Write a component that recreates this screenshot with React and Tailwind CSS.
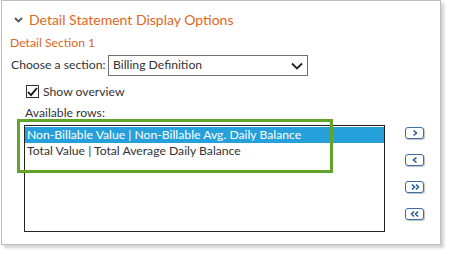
import React, { useState } from "react";

const ROWS = [
  "Non-Billable Value | Non-Billable Avg. Daily Balance",
  "Total Value | Total Average Daily Balance",
];

const MoveButton = ({ children }) => (
  <button className="w-[19px] h-[12px] flex items-center justify-center rounded-[3px] border border-[#3a6ea5] bg-white shadow-[1px_1px_1px_rgba(0,0,0,0.25)] text-[#2b5c93]">
    {children}
  </button>
);

const Chev = ({ d }) => (
  <svg width="12" height="8" viewBox="0 0 12 8" fill="none" stroke="currentColor" strokeWidth="1.6">
    <path d={d} />
  </svg>
);

const App = () => {
  const [selected, setSelected] = useState(0);
  const [overview, setOverview] = useState(true);

  return (
    <div className="w-[450px] h-[254px] bg-white font-['Lato',sans-serif] text-[#333] whitespace-nowrap">
      <div className="w-[440px] h-[245px] ml-px border border-[#bdbdbd] bg-white shadow-[3px_3px_3px_rgba(0,0,0,0.18)] relative">
        <div className="flex items-center gap-[6px] pl-[12px] pt-[9px] h-[29px] text-[#e0661c]">
          <svg width="9" height="6" viewBox="0 0 9 6" fill="none" stroke="#555" strokeWidth="1.8">
            <path d="M1 1l3.5 3.5L8 1" />
          </svg>
          <span className="text-[14px] leading-[20px]">Detail Statement Display Options</span>
        </div>

        <div className="pl-[8px] pt-[5px] h-[25px] text-[12.2px] leading-[16px] text-[#e0661c]">Detail Section 1</div>

        <div className="flex items-center pl-[9px] h-[21px] text-[12.2px]">
          <span className="w-[97px]">Choose a section:</span>
          <div className="w-[200px] h-[21px] border border-[#707070] flex items-center justify-between pl-[4px] pr-[4px]">
            <span>Billing Definition</span>
            <svg width="12" height="8" viewBox="0 0 12 8" fill="none" stroke="#222" strokeWidth="1.8">
              <path d="M1 1.5l5 5 5-5" />
            </svg>
          </div>
        </div>

        <label className="flex items-center gap-[4px] pl-[24px] pt-[7px] h-[24px] text-[12.2px] leading-[16px]">
          <span
            onClick={() => setOverview(!overview)}
            className="w-[13px] h-[13px] border border-[#333] flex items-center justify-center bg-white"
          >
            {overview && (
              <svg width="11" height="10" viewBox="0 0 11 10" fill="none" stroke="#111" strokeWidth="1.8">
                <path d="M1 5l3 3.2L10 1" />
              </svg>
            )}
          </span>
          Show overview
        </label>

        <div className="pl-[23px] pt-[5px] h-[23px] text-[12.2px] leading-[16px]">Available rows:</div>

        <div className="flex pl-[22px] pt-[2px]">
          <div className="w-[361px] h-[107px] border border-[#222] text-[12.2px] leading-[16px] pt-px">
            {ROWS.map((r, i) => (
              <div
                key={r}
                onClick={() => setSelected(i)}
                className={i === selected ? "bg-[#26a0da] text-white pl-[2px]" : "pl-[2px]"}
              >
                {r}
              </div>
            ))}
          </div>
          <div className="flex flex-col gap-[15px] pl-[20px] pt-[2px]">
            <MoveButton><Chev d="M4.5 1.5l3 2.5-3 2.5" /></MoveButton>
            <MoveButton><Chev d="M7.5 1.5l-3 2.5 3 2.5" /></MoveButton>
            <MoveButton><Chev d="M3 1.5l2.5 2.5L3 6.5M7 1.5l2.5 2.5L7 6.5" /></MoveButton>
            <MoveButton><Chev d="M5 1.5L2.5 4 5 6.5M9 1.5L6.5 4 9 6.5" /></MoveButton>
          </div>
        </div>

        <div className="absolute left-[15px] top-[118px] w-[316px] h-[54px] border-[3px] border-[#62a329] pointer-events-none" />
      </div>
    </div>
  );
};

export default App;
